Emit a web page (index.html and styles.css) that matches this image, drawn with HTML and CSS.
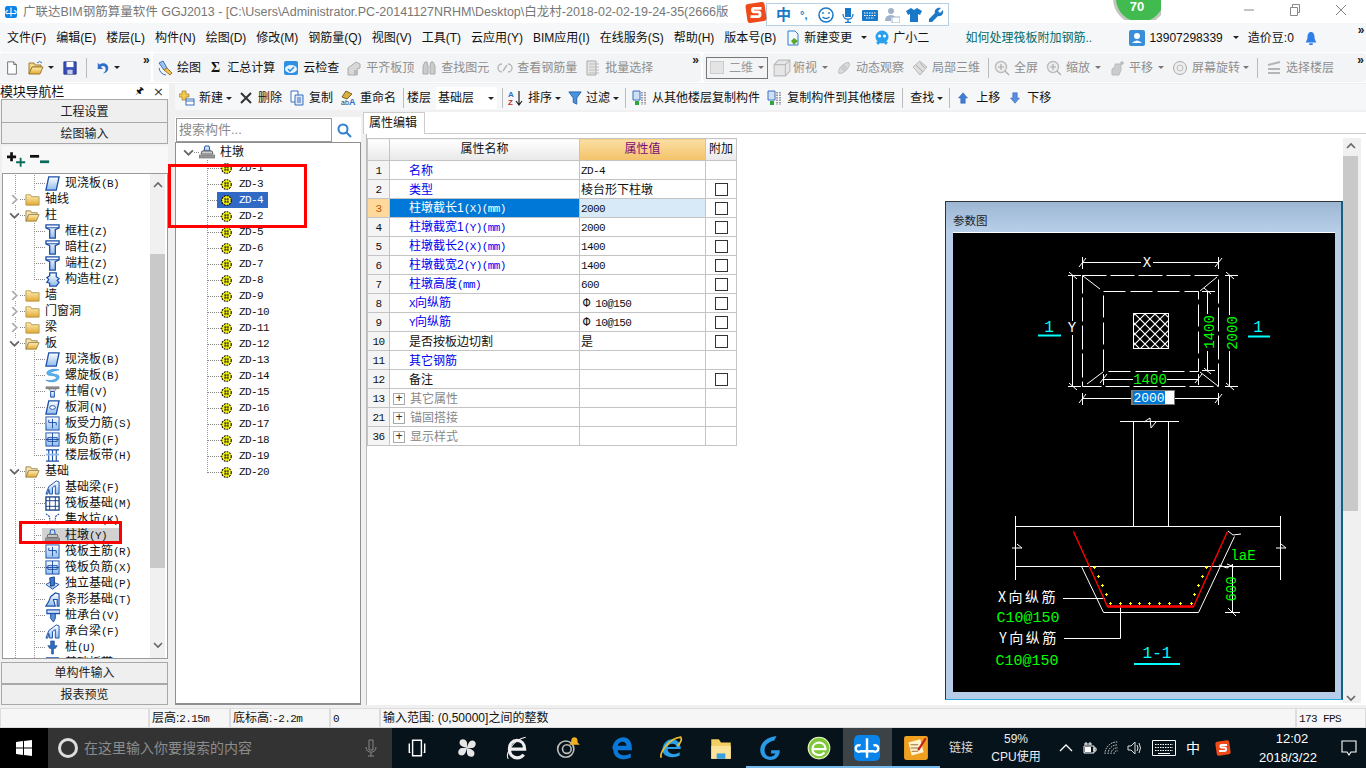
FILE: index.html
```html
<!DOCTYPE html>
<html lang="zh-CN">
<head>
<meta charset="utf-8">
<title>广联达BIM钢筋算量软件 GGJ2013</title>
<link rel="stylesheet" href="styles.css">
</head>
<body>
<svg class="defs" width="0" height="0" aria-hidden="true">
  <defs>
    <linearGradient id="gBlue" x1="0" y1="0" x2="0" y2="1"><stop offset="0" stop-color="#ffffff"/><stop offset="1" stop-color="#8fbcec"/></linearGradient>
    <linearGradient id="gFolder" x1="0" y1="0" x2="0" y2="1"><stop offset="0" stop-color="#fdf0b8"/><stop offset="1" stop-color="#e3a82e"/></linearGradient>
    <pattern id="hatch" width="10" height="10" patternUnits="userSpaceOnUse"><path d="M0 0L10 10M10 0L0 10" stroke="#fff" stroke-width="1.2"/></pattern>
    <symbol id="chevR" viewBox="0 0 10 10"><path d="M3 1l4 4-4 4" fill="none" stroke="#aaa" stroke-width="1.6"/></symbol>
    <symbol id="chevD" viewBox="0 0 10 10"><path d="M1 3l4 4 4-4" fill="none" stroke="#666" stroke-width="1.6"/></symbol>
    <symbol id="chevU" viewBox="0 0 10 10"><path d="M1 7l4-4 4 4" fill="none" stroke="#666" stroke-width="1.6"/></symbol>
    <symbol id="folder" viewBox="0 0 16 16"><path d="M1 3h5l1 2h8v9H1z" fill="url(#gFolder)" stroke="#b89a55"/></symbol>
    <symbol id="folderO" viewBox="0 0 16 16"><path d="M1 3h5l1 2h6v2H4l-3 7z" fill="#f3e3b0" stroke="#a08a55"/><path d="M4 7h11l-3 7H1z" fill="url(#gFolder)" stroke="#a08a55"/></symbol>
    <symbol id="slab" viewBox="0 0 16 16"><path d="M4 1h11l-3 14H1z" fill="url(#gBlue)" stroke="#1b4fa8" stroke-width="1.4"/></symbol>
    <symbol id="tcol" viewBox="0 0 16 16"><path d="M1 1h14v3l-4 2v9H5V6L1 4z" fill="url(#gBlue)" stroke="#1b4fa8" stroke-width="1.4"/><path d="M1 4h14" stroke="#1b4fa8"/></symbol>
    <symbol id="gz" viewBox="0 0 16 16"><path d="M5 1h7v4l3 2-2 2 2 2-3 4H5v-3L2 11l2-3-2-2 3-2z" fill="url(#gBlue)" stroke="#1b4fa8" stroke-width="1.4"/></symbol>
    <symbol id="spiral" viewBox="0 0 16 16"><path d="M15 2C8 0 1 3 2 6c1 3 9 1 10 4 1 2-5 4-11 3 5 3 13 2 14-3 1-4-8-3-9-5 0-1 4-2 9-3z" fill="#5bb5f0" stroke="#1b7fd0" stroke-width=".6"/></symbol>
    <symbol id="cap" viewBox="0 0 16 16"><path d="M1 3h14v2H1z" fill="#999" stroke="#555" stroke-width=".6"/><path d="M4 5h8l-2 3H6z" fill="#ddd" stroke="#555" stroke-width=".6"/><path d="M6 8h4v6H6z" fill="url(#gBlue)" stroke="#1b4fa8"/></symbol>
    <symbol id="hole" viewBox="0 0 16 16"><path d="M4 1h11l-3 14H1z" fill="url(#gBlue)" stroke="#1b4fa8" stroke-width="1.4"/><ellipse cx="8" cy="8" rx="3" ry="2" fill="#fff" stroke="#1b4fa8"/></symbol>
    <symbol id="rebarA" viewBox="0 0 16 16"><rect x="1" y="1" width="14" height="14" fill="url(#gBlue)" stroke="#1b4fa8"/><path d="M8 3v10M4 7h8M4 4v3M12 7v3" fill="none" stroke="#1b4fa8"/></symbol>
    <symbol id="rebarB" viewBox="0 0 16 16"><rect x="1" y="1" width="14" height="14" fill="url(#gBlue)" stroke="#1b4fa8"/><path d="M8 1v14M1 8h14M3 6h10v4H3z" fill="none" stroke="#1b4fa8"/></symbol>
    <symbol id="band" viewBox="0 0 16 16"><path d="M1 2h14M1 14h14M4 2v12M8 2v12M12 2v12" fill="none" stroke="#1b4fa8" stroke-width="1.2"/><path d="M1 7h14" stroke="#8fbcec" stroke-width="2"/></symbol>
    <symbol id="beam" viewBox="0 0 16 16"><path d="M1 15l3-8 8-6 3 1v13h-4V6L8 8v7H5l-1-5-1 5z" fill="url(#gBlue)" stroke="#1b4fa8"/></symbol>
    <symbol id="raft" viewBox="0 0 16 16"><rect x="1" y="1" width="14" height="14" fill="#fff" stroke="#123f86" stroke-width="1.4"/><path d="M5 1v14M11 1v14M1 5h14M1 11h14" stroke="#123f86"/></symbol>
    <symbol id="pit" viewBox="0 0 16 16"><path d="M1 2l4 3v5h6V5l4-3M5 10l-3 3M11 10l3 3" fill="none" stroke="#1b4fa8" stroke-width="1.2" stroke-dasharray="2 1"/></symbol>
    <symbol id="dun" viewBox="0 0 16 16"><path d="M6 2h4l1 5H5z" fill="url(#gBlue)" stroke="#1b4fa8"/><path d="M3 7h10l1 3H2z" fill="#cfcfcf" stroke="#666"/><path d="M0 11h16v3H0z" fill="#999" stroke="#666" stroke-width=".6"/></symbol>
    <symbol id="duli" viewBox="0 0 16 16"><path d="M1 9l6-3 8 3-7 5z" fill="url(#gBlue)" stroke="#1b4fa8"/><path d="M5 2l5-1v9l-4 1z" fill="#3f78c8" stroke="#123f86"/></symbol>
    <symbol id="tiao" viewBox="0 0 16 16"><path d="M1 15l3-5 2-5 5-4 4 1v13h-2V8H9l2 7z" fill="url(#gBlue)" stroke="#1b4fa8" stroke-width="1.2"/></symbol>
    <symbol id="zct" viewBox="0 0 16 16"><path d="M2 2h14v4H2z" fill="url(#gBlue)" stroke="#1b4fa8" stroke-width="1.2"/><path d="M6 6h5v5l-2 4-3-4z" fill="#5f93d8" stroke="#1b4fa8"/></symbol>
    <symbol id="zhu" viewBox="0 0 16 16"><path d="M6 1h4v5h3l-2 3H9v6H7V9H5L3 6h3z" fill="#2f6dc0" stroke="#123f86" stroke-width=".6"/></symbol>
    <symbol id="gear" viewBox="0 0 12 12"><circle cx="6" cy="6" r="5.2" fill="#ff0" stroke="#000" stroke-width="1.2" stroke-dasharray="2 1"/><path d="M3.5 4.5h5M3.5 7.5h5M4.5 3v6M7.5 3v6" stroke="#333" stroke-width="1"/></symbol>
    <symbol id="doc" viewBox="0 0 16 16"><path d="M3 1h7l3 3v11H3z" fill="#fff" stroke="#666"/><path d="M10 1v3h3" fill="#ddd" stroke="#666"/></symbol>
    <symbol id="open" viewBox="0 0 16 16"><path d="M1 3h5l1 2h6v2H4l-3 7z" fill="#f3d98a" stroke="#a07a30"/><path d="M4 7h11l-3 7H1z" fill="url(#gFolder)" stroke="#a07a30"/><path d="M9 3q3-3 5 0" fill="none" stroke="#3a6fc0"/></symbol>
    <symbol id="save" viewBox="0 0 16 16"><path d="M1 1h14v14H1z" fill="#3a4fb8" stroke="#1d2f80"/><path d="M4 1h8v6H4z" fill="#fff"/><path d="M5 10h6v5H5z" fill="#c6cfe6"/></symbol>
    <symbol id="undo" viewBox="0 0 16 16"><path d="M2 2v7h6L5.500 6.500C8 5 11 6 11 9c0 2-1 4-3 5 4 0 6-3 6-6 0-5-6-7-10-4z" fill="#2f6fc8"/></symbol>
    <symbol id="draw" viewBox="0 0 16 16"><path d="M2 3l4-2 4 7-3 2z" fill="#9ec4ee" stroke="#3a6fc0"/><path d="M7 10l3-2 5 5-2 2z" fill="#f0c050" stroke="#a07a30"/><path d="M2 8q1 6 7 7" fill="none" stroke="#3a6fc0"/></symbol>
    <symbol id="cloud" viewBox="0 0 16 16"><rect x="1" y="1" width="14" height="14" rx="2" fill="#2f8fe0"/><ellipse cx="8" cy="9" rx="6" ry="4" fill="#eaf5ff"/><path d="M5 9l2 2 4-4" fill="none" stroke="#2f8fe0" stroke-width="1.6"/></symbol>
    <symbol id="gAlign" viewBox="0 0 16 16"><path d="M2 15V8l8-6 4 2v4l-3 1v6z" fill="#d8d8d8" stroke="#aaa"/><path d="M8 10h4v5H8z" fill="#bbb"/></symbol>
    <symbol id="gBino" viewBox="0 0 16 16"><path d="M2 6l2-4h2l1 4v8H2zM9 6l1-4h2l2 4v8H9z" fill="#ccc" stroke="#aaa"/></symbol>
    <symbol id="gLink" viewBox="0 0 16 16"><path d="M5 4a3 3 0 1 0 0 8M11 4a3 3 0 1 1 0 8M6 11l4-6" fill="none" stroke="#b5b5b5" stroke-width="1.4"/></symbol>
    <symbol id="gList" viewBox="0 0 16 16"><path d="M2 1h9v14H2z" fill="#e6e6e6" stroke="#aaa"/><path d="M4 4h10M4 7h10M4 10h10M4 13h10" stroke="#bbb"/></symbol>
    <symbol id="gBox" viewBox="0 0 16 16"><path d="M1 5l4-4h10v10l-4 4H1zM1 5h10v10M11 5l4-4" fill="#e6e6e6" stroke="#bbb"/></symbol>
    <symbol id="gOrbit" viewBox="0 0 16 16"><ellipse cx="8" cy="8" rx="7" ry="3" transform="rotate(-45 8 8)" fill="#ddd" stroke="#bbb"/><circle cx="8" cy="8" r="3" fill="#ccc"/></symbol>
    <symbol id="gCube" viewBox="0 0 16 16"><path d="M8 1l7 6-7 8-7-8z" fill="#ddd" stroke="#bbb"/><path d="M4 5l7 7M8 3l5 5" stroke="#aaa"/></symbol>
    <symbol id="gZoom" viewBox="0 0 16 16"><circle cx="7" cy="7" r="5.500" fill="#eee" stroke="#bbb" stroke-width="1.400"/><path d="M11 11l4 4M7 4v6M4 7h6" stroke="#aaa" stroke-width="1.200"/></symbol>
    <symbol id="gPan" viewBox="0 0 16 16"><path d="M3 15V9l3-2V4h6v6l-2 5z" fill="#ccc" stroke="#bbb"/><path d="M11 3h4M13 1v4" stroke="#aaa"/></symbol>
    <symbol id="gRot" viewBox="0 0 16 16"><circle cx="8" cy="8" r="6.500" fill="#eee" stroke="#aaa"/><circle cx="8" cy="8" r="3" fill="none" stroke="#bbb"/></symbol>
    <symbol id="gFloor" viewBox="0 0 16 16"><path d="M2 5l12-3M2 9h12M2 13h12" stroke="#b5b5b5" stroke-width="2"/></symbol>
    <symbol id="plusNew" viewBox="0 0 16 16"><path d="M3 1h4v3h3v3H7v3H3V7H0V4h3z" fill="#f0c84a" stroke="#a07a30" stroke-width=".7"/><rect x="7" y="9" width="8" height="6" fill="#fff" stroke="#3a6fc0"/><path d="M7 11h8" stroke="#3a6fc0"/></symbol>
    <symbol id="copy" viewBox="0 0 16 16"><path d="M2 1h7v11H2z" fill="#fff" stroke="#3a6fc0"/><path d="M6 5h8v10H6z" fill="#dbe8f8" stroke="#3a6fc0"/><path d="M8 8h4M8 10h4M8 12h4" stroke="#3a6fc0"/></symbol>
    <symbol id="rename" viewBox="0 0 16 16"><path d="M6 1l6 3-5 5-5-2z" fill="#d8b040" stroke="#806020"/><text x="1" y="15" class="ic-ab">ab</text><text x="9" y="15" class="ic-a">A</text></symbol>
    <symbol id="sort" viewBox="0 0 16 16"><text x="0" y="7" class="ic-az">A</text><text x="0" y="15" class="ic-zz">Z</text><path d="M11 1v13M8 11l3 4 3-4" fill="none" stroke="#222" stroke-width="1.200"/></symbol>
    <symbol id="filter" viewBox="0 0 16 16"><path d="M1 1h14L10 8v7l-4-2V8z" fill="#4a93dc" stroke="#1f5fa8"/></symbol>
    <symbol id="fromF" viewBox="0 0 16 16"><path d="M1 1h7v9H1z" fill="#cfe0f4" stroke="#3a6fc0"/><path d="M10 2v13M13 2v13" stroke="#445" stroke-dasharray="1.500 1"/><path d="M3 11h4v4H3z" fill="#2fa83a"/></symbol>
    <symbol id="up" viewBox="0 0 16 16"><path d="M8 1l6 7h-3v7H5V8H2z" fill="#3f7ed8" stroke="#1f4fa0" stroke-width=".6"/></symbol>
    <symbol id="down" viewBox="0 0 16 16"><path d="M8 15l6-7h-3V1H5v7H2z" fill="#5a8fe0" stroke="#1f4fa0" stroke-width=".6"/></symbol>
    <symbol id="appLogo" viewBox="0 0 16 16"><rect width="16" height="16" rx="3" fill="#0a84e8"/><path d="M8 2v12M4 6.500a2 2 0 1 0 0 3.500h8a2 2 0 1 0 0-3.500" fill="none" stroke="#fff" stroke-width="1.500"/></symbol>
    <symbol id="newChange" viewBox="0 0 16 16"><path d="M3 1h7l3 3v11H3z" fill="#f3f8ff" stroke="#2f7fd0"/><path d="M9 8l4 3-4 4-3-4z" fill="#5aa82e"/></symbol>
    <symbol id="xiaoer" viewBox="0 0 16 16"><circle cx="8" cy="7" r="6.500" fill="#28a0f0"/><circle cx="5.500" cy="6" r="1.500" fill="#fff"/><circle cx="10.500" cy="6" r="1.500" fill="#fff"/><path d="M2 12l2 3 2-2h4l2 2 2-3" fill="#28a0f0"/></symbol>
    <symbol id="user" viewBox="0 0 16 16"><rect width="16" height="16" rx="2" fill="#3a8fd8"/><circle cx="8" cy="6" r="3" fill="#fff"/><path d="M3 13q5-5 10 0z" fill="#fff"/></symbol>
    <symbol id="bell" viewBox="0 0 16 16"><path d="M8 1c3 0 4 3 4 6s2 5 2 6H2c0-1 2-3 2-6s1-6 4-6z" fill="#2f7fe8"/><path d="M6 14h4v2H6z" fill="#2f7fe8"/></symbol>
    <symbol id="search" viewBox="0 0 16 16"><circle cx="7" cy="7" r="4.500" fill="none" stroke="#2f7fd0" stroke-width="2"/><path d="M10 10l5 5" stroke="#2f7fd0" stroke-width="2"/></symbol>
    <symbol id="expand" viewBox="0 0 22 18"><path d="M3.500 1h3v3.500H10v3H6.500V11h-3V7.500H0v-3h3.500z" fill="#111"/><path d="M14 7h2v4h4v2h-4v4h-2v-4h-4v-2h4z" fill="#0a6a5c"/></symbol>
    <symbol id="collapse" viewBox="0 0 22 18"><path d="M0 4h10v3H0z" fill="#111"/><path d="M11 10h10v3H11z" fill="#0a6a5c"/></symbol>
    <symbol id="win" viewBox="0 0 16 16"><path d="M0 2l7-1v6.500H0zM8 1l8-1v7.500H8zM0 8.500h7V15l-7-1zM8 8.500h8V16l-8-1z" fill="#fff"/></symbol>
    <symbol id="sLogo" viewBox="0 0 16 16"><rect x="1" y="1" width="14" height="14" rx="2" fill="#f04a1a" transform="rotate(-8 8 8)"/><path d="M12 5H6.500C5 5 5 7.500 6.500 7.500h3c2 0 2 3.500 0 3.500H4" fill="none" stroke="#fff" stroke-width="2"/></symbol>
  </defs>
</svg>

<div class="app">
  <header class="titlebar">
    <svg class="i12"><use href="#appLogo"/></svg>
    <span class="title-text">广联达BIM钢筋算量软件 GGJ2013 - [C:\Users\Administrator.PC-20141127NRHM\Desktop\白龙村-2018-02-02-19-24-35(2666版</span>
    <div class="winbtns">
      <svg class="wb" viewBox="0 0 12 12"><path d="M1 6h10" stroke="#888"/></svg>
      <svg class="wb" viewBox="0 0 12 12"><path d="M1.500 3.500h7v8h-7zM3.500 3V.5h7v8H9" fill="none" stroke="#888"/></svg>
      <svg class="wb" viewBox="0 0 12 12"><path d="M1 1l10 10M11 1L1 11" stroke="#888"/></svg>
    </div>
  </header>

  <nav class="menubar">
    <span class="m">文件(F)</span><span class="m">编辑(E)</span><span class="m">楼层(L)</span><span class="m">构件(N)</span><span class="m">绘图(D)</span><span class="m">修改(M)</span><span class="m">钢筋量(Q)</span><span class="m">视图(V)</span><span class="m">工具(T)</span><span class="m">云应用(Y)</span><span class="m">BIM应用(I)</span><span class="m">在线服务(S)</span><span class="m">帮助(H)</span><span class="m">版本号(B)</span>
    <span class="it m-ic"><svg class="i16"><use href="#newChange"/></svg>新建变更<i class="dd"></i></span>
    <span class="it m-ic2"><svg class="i16"><use href="#xiaoer"/></svg>广小二</span>
    <span class="m-news">如何处理筏板附加钢筋..</span>
    <span class="it m-user"><svg class="i16"><use href="#user"/></svg>13907298339<i class="dd"></i></span>
    <span class="m-bean">造价豆:0</span>
    <svg class="i14 m-bell"><use href="#bell"/></svg>
    <span class="more m-more">»</span>
  </nav>

  <div class="toolbar1">
    <div class="band band-a">
      <svg class="i14"><use href="#doc"/></svg>
      <span class="it"><svg class="i16"><use href="#open"/></svg><i class="dd"></i></span>
      <svg class="i14"><use href="#save"/></svg>
      <i class="sep"></i>
      <span class="it"><svg class="i14"><use href="#undo"/></svg><i class="dd"></i></span>
      <span class="more">»</span>
    </div>
    <div class="band band-b">
      <span class="it"><svg class="i16"><use href="#draw"/></svg>绘图</span>
      <span class="it it-sigma"><b class="sigma">Σ</b>汇总计算</span>
      <span class="it"><svg class="i16"><use href="#cloud"/></svg>云检查</span>
      <span class="it off nudge"><svg class="i16"><use href="#gAlign"/></svg>平齐板顶</span>
      <span class="it off nudge"><svg class="i16"><use href="#gBino"/></svg>查找图元</span>
      <span class="it off"><svg class="i16"><use href="#gLink"/></svg>查看钢筋量</span>
      <span class="it off"><svg class="i16"><use href="#gList"/></svg>批量选择</span>
      <span class="more more-b">»</span>
    </div>
    <div class="band band-c">
      <span class="combo-2d"><i class="sq"></i>二维<i class="dd dd-r"></i></span>
      <span class="it off it-tight"><svg class="i16 i-wide"><use href="#gBox"/></svg>俯视<i class="dd dd-w"></i></span>
      <span class="it off"><svg class="i16"><use href="#gOrbit"/></svg>动态观察</span>
      <span class="it off"><svg class="i16"><use href="#gCube"/></svg>局部三维</span>
      <i class="sep"></i>
      <span class="it off after-sep"><svg class="i16"><use href="#gZoom"/></svg>全屏</span>
      <span class="it off"><svg class="i16"><use href="#gZoom"/></svg>缩放<i class="dd dd-w"></i></span>
      <span class="it off"><svg class="i16"><use href="#gPan"/></svg>平移<i class="dd dd-w"></i></span>
      <span class="it off"><svg class="i16"><use href="#gRot"/></svg>屏幕旋转<i class="dd dd-n"></i></span>
      <i class="sep"></i>
      <span class="it off"><svg class="i16"><use href="#gFloor"/></svg>选择楼层</span>
      <span class="more more-c">»</span>
    </div>
  </div>

  <div class="work">
    <aside class="nav">
      <div class="nav-head"><span class="nav-title">模块导航栏</span><span class="pin">🖈</span><span class="nav-x">×</span></div>
      <div class="nav-btn nb1">工程设置</div>
      <div class="nav-btn nb2">绘图输入</div>
      <div class="nav-tools"><svg class="i-exp"><use href="#expand"/></svg><svg class="i-exp"><use href="#collapse"/></svg></div>
      <div class="nav-tree">
        <div class="nav-list">
          <div class="nr child"><i class="dash"></i><svg class="ni"><use href="#slab"/></svg><span>现浇板<em>(B)</em></span></div>
          <div class="nr top"><svg class="ch"><use href="#chevR"/></svg><i class="dash-s"></i><svg class="nf"><use href="#folder"/></svg><span>轴线</span></div>
          <div class="nr top"><svg class="ch"><use href="#chevD"/></svg><i class="dash-s"></i><svg class="nf"><use href="#folderO"/></svg><span>柱</span></div>
          <div class="nr child"><i class="dash"></i><svg class="ni"><use href="#tcol"/></svg><span>框柱<em>(Z)</em></span></div>
          <div class="nr child"><i class="dash"></i><svg class="ni"><use href="#tcol"/></svg><span>暗柱<em>(Z)</em></span></div>
          <div class="nr child"><i class="dash"></i><svg class="ni"><use href="#tcol"/></svg><span>端柱<em>(Z)</em></span></div>
          <div class="nr child last"><i class="dash"></i><svg class="ni"><use href="#gz"/></svg><span>构造柱<em>(Z)</em></span></div>
          <div class="nr top"><svg class="ch"><use href="#chevR"/></svg><i class="dash-s"></i><svg class="nf"><use href="#folder"/></svg><span>墙</span></div>
          <div class="nr top"><svg class="ch"><use href="#chevR"/></svg><i class="dash-s"></i><svg class="nf"><use href="#folder"/></svg><span>门窗洞</span></div>
          <div class="nr top"><svg class="ch"><use href="#chevR"/></svg><i class="dash-s"></i><svg class="nf"><use href="#folder"/></svg><span>梁</span></div>
          <div class="nr top"><svg class="ch"><use href="#chevD"/></svg><i class="dash-s"></i><svg class="nf"><use href="#folderO"/></svg><span>板</span></div>
          <div class="nr child"><i class="dash"></i><svg class="ni"><use href="#slab"/></svg><span>现浇板<em>(B)</em></span></div>
          <div class="nr child"><i class="dash"></i><svg class="ni"><use href="#spiral"/></svg><span>螺旋板<em>(B)</em></span></div>
          <div class="nr child"><i class="dash"></i><svg class="ni"><use href="#cap"/></svg><span>柱帽<em>(V)</em></span></div>
          <div class="nr child"><i class="dash"></i><svg class="ni"><use href="#hole"/></svg><span>板洞<em>(N)</em></span></div>
          <div class="nr child"><i class="dash"></i><svg class="ni"><use href="#rebarA"/></svg><span>板受力筋<em>(S)</em></span></div>
          <div class="nr child"><i class="dash"></i><svg class="ni"><use href="#rebarB"/></svg><span>板负筋<em>(F)</em></span></div>
          <div class="nr child last"><i class="dash"></i><svg class="ni"><use href="#band"/></svg><span>楼层板带<em>(H)</em></span></div>
          <div class="nr top"><svg class="ch"><use href="#chevD"/></svg><i class="dash-s"></i><svg class="nf"><use href="#folderO"/></svg><span>基础</span></div>
          <div class="nr child"><i class="dash"></i><svg class="ni"><use href="#beam"/></svg><span>基础梁<em>(F)</em></span></div>
          <div class="nr child"><i class="dash"></i><svg class="ni"><use href="#raft"/></svg><span>筏板基础<em>(M)</em></span></div>
          <div class="nr child"><i class="dash"></i><svg class="ni"><use href="#pit"/></svg><span>集水坑<em>(K)</em></span></div>
          <div class="nr child"><i class="dash"></i><span class="sel-gray"><svg class="ni"><use href="#dun"/></svg><span>柱墩<em>(Y)</em></span></span></div>
          <div class="nr child"><i class="dash"></i><svg class="ni"><use href="#rebarA"/></svg><span>筏板主筋<em>(R)</em></span></div>
          <div class="nr child"><i class="dash"></i><svg class="ni"><use href="#rebarB"/></svg><span>筏板负筋<em>(X)</em></span></div>
          <div class="nr child"><i class="dash"></i><svg class="ni"><use href="#duli"/></svg><span>独立基础<em>(P)</em></span></div>
          <div class="nr child"><i class="dash"></i><svg class="ni"><use href="#tiao"/></svg><span>条形基础<em>(T)</em></span></div>
          <div class="nr child"><i class="dash"></i><svg class="ni"><use href="#zct"/></svg><span>桩承台<em>(V)</em></span></div>
          <div class="nr child"><i class="dash"></i><svg class="ni"><use href="#beam"/></svg><span>承台梁<em>(F)</em></span></div>
          <div class="nr child"><i class="dash"></i><svg class="ni"><use href="#zhu"/></svg><span>桩<em>(U)</em></span></div>
          <div class="nr child"><i class="dash"></i><svg class="ni"><use href="#band"/></svg><span>基础板带<em>(W)</em></span></div>
        </div>
        <div class="vbar vbar-nav"><svg class="ar"><use href="#chevU"/></svg><i class="thumb"></i><svg class="ar"><use href="#chevD"/></svg></div>
        <i class="redbox rb-nav"></i>
      </div>
      <div class="nav-btn nb3">单构件输入</div>
      <div class="nav-btn nb4">报表预览</div>
    </aside>

    <div class="content">
      <div class="toolbar2">
        <span class="it"><svg class="i16"><use href="#plusNew"/></svg>新建<i class="dd"></i></span>
        <span class="it it-del"><svg class="i12" viewBox="0 0 12 12"><path d="M1 1l10 10M11 1L1 11" stroke="#333" stroke-width="2"/></svg>删除</span>
        <span class="it"><svg class="i16"><use href="#copy"/></svg>复制</span>
        <span class="it"><svg class="i16"><use href="#rename"/></svg>重命名</span>
        <i class="sep"></i>
        <span class="floor-lab">楼层</span>
        <span class="combo-floor">基础层<i class="dd"></i></span>
        <i class="sep sep-x"></i>
        <span class="it"><svg class="i16"><use href="#sort"/></svg>排序<i class="dd"></i></span>
        <span class="it"><svg class="i14"><use href="#filter"/></svg>过滤<i class="dd"></i></span>
        <i class="sep sep-y"></i>
        <span class="it"><svg class="i16"><use href="#fromF"/></svg>从其他楼层复制构件</span>
        <span class="it"><svg class="i16"><use href="#fromF"/></svg>复制构件到其他楼层</span>
        <i class="sep"></i>
        <span class="it">查找<i class="dd"></i></span>
        <i class="sep sep-y"></i>
        <span class="it it-move"><svg class="i12"><use href="#up"/></svg>上移</span>
        <span class="it it-move"><svg class="i12"><use href="#down"/></svg>下移</span>
      </div>

      <div class="panes">
        <section class="tree-pane">
          <div class="search"><span class="search-box">搜索构件...</span><svg class="i16"><use href="#search"/></svg></div>
          <div class="tree">
            <div class="tr root"><svg class="ch"><use href="#chevD"/></svg><i class="dash-s"></i><svg class="ti"><use href="#dun"/></svg><span>柱墩</span></div>
            <div class="tl">
              <div class="tr leaf"><i class="dash-l"></i><svg class="gi"><use href="#gear"/></svg><span class="zd">ZD-1</span></div>
              <div class="tr leaf"><i class="dash-l"></i><svg class="gi"><use href="#gear"/></svg><span class="zd">ZD-3</span></div>
              <div class="tr leaf"><i class="dash-l"></i><span class="sel-blue"><svg class="gi"><use href="#gear"/></svg><span class="zd">ZD-4</span></span></div>
              <div class="tr leaf"><i class="dash-l"></i><svg class="gi"><use href="#gear"/></svg><span class="zd">ZD-2</span></div>
              <div class="tr leaf"><i class="dash-l"></i><svg class="gi"><use href="#gear"/></svg><span class="zd">ZD-5</span></div>
              <div class="tr leaf"><i class="dash-l"></i><svg class="gi"><use href="#gear"/></svg><span class="zd">ZD-6</span></div>
              <div class="tr leaf"><i class="dash-l"></i><svg class="gi"><use href="#gear"/></svg><span class="zd">ZD-7</span></div>
              <div class="tr leaf"><i class="dash-l"></i><svg class="gi"><use href="#gear"/></svg><span class="zd">ZD-8</span></div>
              <div class="tr leaf"><i class="dash-l"></i><svg class="gi"><use href="#gear"/></svg><span class="zd">ZD-9</span></div>
              <div class="tr leaf"><i class="dash-l"></i><svg class="gi"><use href="#gear"/></svg><span class="zd">ZD-10</span></div>
              <div class="tr leaf"><i class="dash-l"></i><svg class="gi"><use href="#gear"/></svg><span class="zd">ZD-11</span></div>
              <div class="tr leaf"><i class="dash-l"></i><svg class="gi"><use href="#gear"/></svg><span class="zd">ZD-12</span></div>
              <div class="tr leaf"><i class="dash-l"></i><svg class="gi"><use href="#gear"/></svg><span class="zd">ZD-13</span></div>
              <div class="tr leaf"><i class="dash-l"></i><svg class="gi"><use href="#gear"/></svg><span class="zd">ZD-14</span></div>
              <div class="tr leaf"><i class="dash-l"></i><svg class="gi"><use href="#gear"/></svg><span class="zd">ZD-15</span></div>
              <div class="tr leaf"><i class="dash-l"></i><svg class="gi"><use href="#gear"/></svg><span class="zd">ZD-16</span></div>
              <div class="tr leaf"><i class="dash-l"></i><svg class="gi"><use href="#gear"/></svg><span class="zd">ZD-17</span></div>
              <div class="tr leaf"><i class="dash-l"></i><svg class="gi"><use href="#gear"/></svg><span class="zd">ZD-18</span></div>
              <div class="tr leaf"><i class="dash-l"></i><svg class="gi"><use href="#gear"/></svg><span class="zd">ZD-19</span></div>
              <div class="tr leaf last"><i class="dash-l"></i><svg class="gi"><use href="#gear"/></svg><span class="zd">ZD-20</span></div>
            </div>
            <i class="redbox rb-tree"></i>
          </div>
        </section>

        <section class="editor">
          <div class="tabs"><span class="tab">属性编辑</span></div>
          <div class="editor-body">
            <div class="table-wrap">
              <table class="props">
                <colgroup><col class="c1"><col class="c2"><col class="c3"><col class="c4"></colgroup>
                <thead><tr><th></th><th>属性名称</th><th class="th-val">属性值</th><th>附加</th></tr></thead>
                <tbody>
                  <tr><td class="idx">1</td><td class="nm link">名称</td><td class="val">ZD-4</td><td></td></tr>
                  <tr><td class="idx">2</td><td class="nm link">类型</td><td class="val val-cn">棱台形下柱墩</td><td class="ck"><i class="box"></i></td></tr>
                  <tr class="cur"><td class="idx">3</td><td class="nm">柱墩截长1<em>(X)(mm)</em></td><td class="val">2000</td><td class="ck"><i class="box"></i></td></tr>
                  <tr><td class="idx">4</td><td class="nm link">柱墩截宽1<em>(Y)(mm)</em></td><td class="val">2000</td><td class="ck"><i class="box"></i></td></tr>
                  <tr><td class="idx">5</td><td class="nm link">柱墩截长2<em>(X)(mm)</em></td><td class="val">1400</td><td class="ck"><i class="box"></i></td></tr>
                  <tr><td class="idx">6</td><td class="nm link">柱墩截宽2<em>(Y)(mm)</em></td><td class="val">1400</td><td class="ck"><i class="box"></i></td></tr>
                  <tr><td class="idx">7</td><td class="nm link">柱墩高度<em>(mm)</em></td><td class="val">600</td><td class="ck"><i class="box"></i></td></tr>
                  <tr><td class="idx">8</td><td class="nm link"><em>X</em>向纵筋</td><td class="val"><span class="steel">Φ</span>10@150</td><td class="ck"><i class="box"></i></td></tr>
                  <tr><td class="idx">9</td><td class="nm link"><em>Y</em>向纵筋</td><td class="val"><span class="steel">Φ</span>10@150</td><td class="ck"><i class="box"></i></td></tr>
                  <tr><td class="idx">10</td><td class="nm">是否按板边切割</td><td class="val val-cn">是</td><td class="ck"><i class="box"></i></td></tr>
                  <tr><td class="idx">11</td><td class="nm link">其它钢筋</td><td class="val"></td><td></td></tr>
                  <tr><td class="idx">12</td><td class="nm">备注</td><td class="val"></td><td class="ck"><i class="box"></i></td></tr>
                  <tr class="grp"><td class="idx">13</td><td class="nm-g"><span class="grp-in"><i class="plus">+</i>其它属性</span></td><td></td><td></td></tr>
                  <tr class="grp"><td class="idx">21</td><td class="nm-g"><span class="grp-in"><i class="plus">+</i>锚固搭接</span></td><td></td><td></td></tr>
                  <tr class="grp"><td class="idx">36</td><td class="nm-g"><span class="grp-in"><i class="plus">+</i>显示样式</span></td><td></td><td></td></tr>
                </tbody>
              </table>
            </div>
            <div class="vbar vbar-ed"><svg class="ar"><use href="#chevU"/></svg><i class="thumb"></i><svg class="ar"><use href="#chevD"/></svg></div>
          </div>

          <div class="param">
            <div class="param-title">参数图</div>
            <svg class="cad" width="382" height="459" viewBox="953 234 382 459">
              <rect x="953" y="234" width="382" height="459" fill="#000"/>
              <g class="ln">
                <rect x="1082.500" y="276.500" width="136" height="111" stroke-dasharray="24 4"/>
                <rect x="1103.500" y="292.500" width="95" height="80" stroke-dasharray="22 5"/>
                <path d="M1083 277l17 13M1217 278l-17 14M1087 385l16-12M1218 387l-18-14"/>
                <rect x="1133.500" y="314.500" width="35" height="35" fill="url(#hatch)"/>
                <path d="M1082.500 263.500H1141M1153 263.500H1218.500M1082.500 258v12M1218.500 258v12M1079 268l7-9M1215 268l7-9"/>
                <path d="M1072.500 276.500V322M1072.500 336V387.500M1068 276.500h13M1068 387.500h13M1069 273l8 7M1069 384l8 7"/>
                <path d="M1229.500 276.500V316M1229.500 352V387.500M1225 276.500h13M1225 387.500h13M1226 273l8 7M1226 384l8 7"/>
                <path d="M1207.500 292.500V315M1207.500 352V372.500M1202 292.500h13M1202 371.500h13M1204 369l7 6M1204 289l7 6"/>
                <path d="M1103.500 380.500H1133M1167 380.500H1198.500M1103.500 375v11M1198.500 375v11M1100 384l7-9M1195 384l7-9"/>
                <path d="M1082.500 399.500H1131M1175 399.500H1218.500M1082.500 394v12M1218.500 394v12M1079 404l7-9M1215 404l7-9"/>
                <path d="M1120 422.500H1179M1133.500 422.500V527.500M1168.500 422.500V527.500M1144 423l6-4 1 10 5-6"/>
                <path d="M1015.500 527.500H1280.500M1015.500 567.500H1280.500M1015.500 517V581M1280.500 517V581M1012 549h10l-5-4M1276 549h10l-5-4"/>
                <path d="M1081.500 567.500L1103.500 613.500H1198.500L1234.500 537.500M1228 532l5 4 8-1M1219 566l8 3 5-3"/>
                <path d="M1063 599.500H1105M1064 639.500H1120.500V604M1232.500 565V613M1225 613.500h15M1228 609l8 8M1227 565l7 3"/>
              </g>
              <path class="red" d="M1073.500 532.500L1107.500 607.500H1193.500L1227.500 532.500"/>
              <path class="red-b" d="M1107.500 607.500H1193.500"/>
              <path class="yel" d="M1093 568.500h3M1094.500 567v3M1097 577.500h3M1098.500 576v3M1101 586.500h3M1102.500 585v3M1105 595.500h3M1106.500 594v3M1109 604.500h3M1110.500 603v3M1119 604.500h3M1120.500 603v3M1129 604.500h3M1130.500 603v3M1138 604.500h3M1139.500 603v3M1148 604.500h3M1149.500 603v3M1158 604.500h3M1159.500 603v3M1168 604.500h3M1169.500 603v3M1179 604.500h3M1180.500 603v3M1190 604.500h3M1191.500 603v3M1193 595.500h3M1194.500 594v3M1197 586.500h3M1198.500 585v3M1201 577.500h3M1202.500 576v3M1205 568.500h3M1206.500 567v3"/>
              <path class="cy" d="M1038 336.500H1061M1248 337.500H1270M1134 665H1180"/>
              <text class="t-w" x="1147" y="268" text-anchor="middle">X</text>
              <text class="t-w" x="1072" y="333" text-anchor="middle">Y</text>
              <text class="t-c" x="1049" y="333" text-anchor="middle">1</text>
              <text class="t-c" x="1258" y="333" text-anchor="middle">1</text>
              <text class="t-g t-d" transform="translate(1214 333) rotate(-90)" text-anchor="middle">1400</text>
              <text class="t-g t-d" transform="translate(1237 334) rotate(-90)" text-anchor="middle">2000</text>
              <text class="t-g t-d" x="1150" y="385" text-anchor="middle">1400</text>
              <rect x="1131" y="391" width="44" height="15" fill="#777"/>
              <rect x="1133" y="392" width="41" height="13" fill="#fff"/>
              <rect x="1133" y="392" width="32" height="13" fill="#0078d7"/>
              <text class="t-s" x="1149" y="403" text-anchor="middle">2000</text>
              <text class="t-g t-d" transform="translate(1236 590) rotate(-90)" text-anchor="middle">600</text>
              <text class="t-g t-d" x="1243" y="561" text-anchor="middle">laE</text>
              <text class="t-cn" x="1028" y="603" text-anchor="middle">X向纵筋</text>
              <text class="t-g" x="1028" y="623" text-anchor="middle">C10@150</text>
              <text class="t-cn" x="1029" y="644" text-anchor="middle">Y向纵筋</text>
              <text class="t-g" x="1027" y="666" text-anchor="middle">C10@150</text>
              <text class="t-c" x="1157" y="659" text-anchor="middle">1-1</text>
            </svg>
          </div>
        </section>
      </div>
    </div>
  </div>

  <footer class="statusbar">
    <span class="st"></span><span class="st">层高:<em>2.15m</em></span><span class="st">底标高:<em>-2.2m</em></span><span class="st"><em>0</em></span><span class="st">输入范围: (0,50000]之间的整数</span><span class="st"><em>173 FPS</em></span>
  </footer>

  <div class="taskbar">
    <div class="start"><svg class="i16"><use href="#win"/></svg></div>
    <div class="tsearch"><i class="ring"></i><span class="ts-text">在这里输入你要搜索的内容</span>
      <svg class="mic" viewBox="0 0 12 18"><path d="M4 1h4v10H4zM1 8c0 7 10 7 10 0M6 14v3M3 17h6" fill="none" stroke="#888"/></svg></div>
    <div class="tk"><svg class="ti-20" viewBox="0 0 20 20"><path d="M6 3h8v14H6zM3 6v8h1M17 6v8h-1" fill="none" stroke="#fff" stroke-width="1.300"/></svg></div>
    <div class="tk"><svg class="ti-20" viewBox="0 0 24 24"><path d="M12 12C7 11 3 9 4 5s7-3 8 1zM12 12c1-5 3-9 7-8s3 7-1 8zM12 12c5 1 9 3 8 7s-7 3-8-1zM12 12c-1 5-3 9-7 8s-3-7 1-8z" fill="#e6e6e6"/></svg></div>
    <div class="tk"><svg class="ti-24" viewBox="0 0 24 24"><path d="M5 13h14c0-5-3-8-7-8s-7 3-7 8c0 5 3 8 7 8 3 0 5-1 6-3" fill="none" stroke="#eee" stroke-width="3"/><path d="M4 22C1 18 8 4 20 2" fill="none" stroke="#eee"/></svg></div>
    <div class="tk tk-wide"><svg class="ti-24" viewBox="0 0 24 24"><circle cx="9" cy="13" r="7.500" fill="none" stroke="#bbb" stroke-width="1.500"/><circle cx="10" cy="13" r="4" fill="none" stroke="#bbb" stroke-width="1.500"/><path d="M17 2c3 0 3 3 3 5l2 2H12l2-2c0-2 0-5 3-5z" fill="#f0b020"/></svg></div>
    <div class="tk"><svg class="ti-24" viewBox="0 0 24 24"><path d="M4 12C5 5 10 2 14 2c5 0 8 4 8 10v2H9c0 5 7 6 12 3v4c-7 3-16 1-16-7zM9 10h8c0-5-7-5-8 0z" fill="#0a78d8"/></svg></div>
    <div class="tk"><svg class="ti-24" viewBox="0 0 24 24"><path d="M4 13C5 7 9 4 13 4c5 0 8 4 8 9H9c0 5 7 6 11 3v3c-6 3-16 2-16-6zM9 11h8c0-4-7-4-8 0z" fill="#2aa0e8"/><path d="M3 21C1 17 10 3 21 2c2 3-1 6-3 8" fill="none" stroke="#f0c030" stroke-width="1.500"/></svg></div>
    <div class="tk"><svg class="ti-24" viewBox="0 0 24 24"><path d="M3 4h7l2 3h9v15H3z" fill="#f4cd62"/><path d="M3 10h18v12H3z" fill="#fbe39a"/><path d="M8 17h8v5H8z" fill="#3aa0e0"/></svg></div>
    <div class="tk on"><svg class="ti-24" viewBox="0 0 24 24"><path d="M18 1C9 2 3 7 3 14c0 5 4 9 9 9 5 0 9-3 9-9h-8v3h4c-1 2-3 3-5 3-3 0-5-3-5-6 0-5 4-8 9-9z" fill="#2a9ae8"/></svg></div>
    <div class="tk on"><svg class="ti-24" viewBox="0 0 24 24"><circle cx="12" cy="12" r="10" fill="#7ec83a" stroke="#e6f5c8"/><path d="M6 13h12c0-8-12-8-12 0 0 6 8 7 11 3" fill="none" stroke="#fff" stroke-width="2"/></svg></div>
    <div class="tk on active"><svg class="ti-24"><use href="#appLogo"/></svg></div>
    <div class="tk on"><svg class="ti-24" viewBox="0 0 24 24"><rect x="1" y="1" width="22" height="22" rx="2" fill="#f0a020"/><path d="M5 7l11-3 3 12-11 3z" fill="#fff3d0"/><path d="M7 9h7M7 12h8M8 15h6" stroke="#a07030"/><path d="M14 14l7-11" stroke="#c02020" stroke-width="2"/></svg></div>
    <span class="tray-link">链接</span>
    <span class="tray-cpu"><span>59%</span><span>CPU使用</span></span>
    <div class="tray">
      <svg class="tr-i" viewBox="0 0 16 16"><path d="M2 11l6-6 6 6" fill="none" stroke="#fff" stroke-width="1.300"/></svg>
      <svg class="tr-i" viewBox="0 0 16 16"><path d="M3 6h10v7H3zM13 8h2v3h-2zM5 2v3M9 2v3M3 4h8" fill="none" stroke="#fff"/><path d="M4 7h6v5H4z" fill="#fff"/></svg>
      <svg class="tr-i" viewBox="0 0 16 16"><path d="M1 14a12 12 0 0 1 13-12M4 14a9 9 0 0 1 10-9M7 14a6 6 0 0 1 7-6M10 14a3 3 0 0 1 4-3" fill="none" stroke="#ddd" stroke-dasharray="1.500 1"/></svg>
      <svg class="tr-i" viewBox="0 0 16 16"><path d="M1 6h3l4-4v12l-4-4H1zM10 5q2 3 0 6M12 3q3 5 0 10" fill="none" stroke="#ddd"/></svg>
      <svg class="tr-k" viewBox="0 0 24 16"><path d="M.5 .5h23v15H.5z" fill="none" stroke="#fff"/><path d="M3 4.500h18M3 7.500h18M3 10.500h18" fill="none" stroke="#fff" stroke-dasharray="1.500 1"/><path d="M6 13.500h12" stroke="#fff"/></svg>
      <span class="tr-z">中</span>
      <svg class="tr-i tr-s"><use href="#sLogo"/></svg>
    </div>
    <span class="clock"><span>12:02</span><span>2018/3/22</span></span>
    <svg class="notif" viewBox="0 0 16 16"><path d="M1 1h14v11H10l-2 3-2-3H1z" fill="none" stroke="#fff" stroke-width="1.100"/></svg>
  </div>

  <div class="sogou">
    <svg class="sg-s"><use href="#sLogo"/></svg>
    <div class="sg-bar">
      <b class="sg-z">中</b><b class="sg-p">°,</b>
      <svg class="sg-i" viewBox="0 0 16 16"><circle cx="8" cy="8" r="7" fill="none" stroke="#1a78c8" stroke-width="1.500"/><path d="M5 5v2M11 5v2M4.500 10q3.500 3 7 0" fill="none" stroke="#1a78c8" stroke-width="1.300"/></svg>
      <svg class="sg-i" viewBox="0 0 16 16"><path d="M5 1h6v9H5z" fill="#1a78c8"/><path d="M3 7c0 7 10 7 10 0M8 13v3M5 15.500h6" fill="none" stroke="#1a78c8" stroke-width="1.300"/></svg>
      <svg class="sg-i" viewBox="0 0 16 16"><rect y="3" width="16" height="11" rx="1" fill="#1a78c8"/><path d="M2 6h12M2 8.500h12M4 11h8" stroke="#fff" stroke-dasharray="1.500 1"/></svg>
      <svg class="sg-i" viewBox="0 0 16 16"><circle cx="7" cy="4" r="3" fill="#9fb3c8"/><path d="M1 14q0-6 6-6 3 0 4 2H7v4z" fill="#9fb3c8"/><rect x="8" y="10" width="8" height="6" fill="#fff" stroke="#9fb3c8"/></svg>
      <svg class="sg-i" viewBox="0 0 16 16"><path d="M5 1L0 4l2 4 2-1v8h8V7l2 1 2-4-5-3-3 2z" fill="#1a78c8"/></svg>
      <svg class="sg-i" viewBox="0 0 16 16"><path d="M15 3l-3 3-2-2 3-3C9 0 6 3 7 6L1 12v3h3l6-6c3 1 6-2 5-6z" fill="#1a78c8"/></svg>
    </div>
  </div>
  <div class="score"><span>70</span></div>
</div>
</body>
</html>
```

FILE: styles.css
```css
* { box-sizing: border-box; }
html, body { margin: 0; padding: 0; width: 1366px; height: 768px; overflow: hidden; background: #fff; }
body { font: 12px/16px "Liberation Sans", "Noto Sans CJK SC", sans-serif; color: #111; }
i, em, b { font-style: normal; }
.defs { position: absolute; }
.app { position: relative; width: 1366px; height: 768px; display: flex; flex-direction: column; overflow: hidden; }
.ic-ab { font: 7px "Liberation Sans", sans-serif; fill: #333; }
.ic-a { font: bold 9px "Liberation Sans", sans-serif; fill: #2f6fc8; }
.ic-az { font: bold 8px "Liberation Sans", sans-serif; fill: #2f6fc8; }
.ic-zz { font: bold 8px "Liberation Sans", sans-serif; fill: #c03030; }

.i12 { width: 12px; height: 12px; flex: none; }
.i14 { width: 14px; height: 14px; flex: none; }
.i16 { width: 16px; height: 16px; flex: none; }
.i-wide { width: 20px; height: 18px; }
.dd { width: 0; height: 0; flex: none; border: 3px solid transparent; border-top: 3px solid #222; border-bottom: 0; }
.sep { width: 1px; height: 20px; background: #bbb; flex: none; }
.it { display: inline-flex; align-items: center; gap: 4px; white-space: nowrap; }
.off { color: #8e8e8e; }
.more { font: bold 12px/10px "Liberation Sans", sans-serif; color: #222; align-self: flex-start; margin-top: 2px; }

/* title */
.titlebar { height: 23px; flex: none; background: #fff; display: flex; align-items: center; padding-left: 5px; gap: 6px; }
.title-text { width: 720px; overflow: hidden; white-space: nowrap; color: #777; font-size: 12.500px; }
.winbtns { margin-left: auto; display: flex; gap: 34px; padding-right: 19px; padding-bottom: 4px; }
.wb { width: 12px; height: 12px; }

/* menu */
.menubar { height: 29px; flex: none; background: #f6f7f8; display: flex; align-items: center; padding-left: 2px; white-space: nowrap; }
.m { padding: 0 5px; }
.m-ic { margin-left: 4px; gap: 3px; }
.m-ic .dd { margin-left: 6px; }
.m-ic2 { margin-left: 7px; gap: 3px; }
.m-news { margin-left: 36px; color: #006a6a; width: 164px; }
.m-user { gap: 4px; }
.m-user .dd { margin-left: 6px; }
.m-bean { margin-left: 9px; }
.m-bell { margin-left: 10px; }
.m-more { margin-left: 40px; }

/* toolbar 1 */
.toolbar1 { height: 31px; flex: none; display: flex; background: #fff; padding-top: 1px; }
.band { height: 29px; background: #f3f4f6; border-radius: 3px; display: flex; align-items: center; }
.band-a { width: 151px; padding-left: 5px; gap: 9px; position: relative; }
.band-a .more { margin-left: 14px; }
.band-b { width: 548px; margin-left: 2px; padding-left: 4px; gap: 8px; }
.band-b .it-sigma { gap: 7px; margin-left: 2px; }
.nudge { margin-left: -1px; }
.sigma { font: bold 14px/14px "Liberation Serif", serif; color: #111; }
.more-b { margin-left: auto; margin-right: 2px; }
.band-c { flex: 1; margin-left: 2px; padding-left: 3px; gap: 8px; }
.more-c { margin-left: auto; margin-right: 2px; }
.combo-2d { width: 62px; height: 22px; border: 1px solid #777; display: flex; align-items: center; padding-left: 3px; gap: 5px; color: #999; }
.sq { width: 14px; height: 13px; background: #e4e4e4; border: 1px solid #ccc; }
.dd-r { margin-left: auto; margin-right: 3px; border-top-color: #777; }
.dd-w { margin-left: 1px; border-top-color: #777; }
.dd-n { margin-left: -1px; border-top-color: #777; }
.it-tight { gap: 1px; margin-left: -4px; }
.it-tight .dd-w { margin-left: 4px; }
.after-sep { margin-left: -3px; }

/* work */
.work { height: 625px; flex: none; display: flex; background: #f0f0f0; }
.nav { width: 169px; flex: none; display: flex; flex-direction: column; padding-top: 1px; background: #f0f0f0; }
.nav-head { height: 15px; display: flex; align-items: center; background: #fff; font-size: 13px; }
.nav-title { flex: 1; letter-spacing: -.2px; }
.pin { font: 10px "DejaVu Sans", sans-serif; width: 18px; }
.nav-x { font: 13px "DejaVu Sans", sans-serif; width: 16px; color: #333; }
.nav-btn { margin-left: 1px; width: 167px; border: 1px solid #a8a8a8; background: #efefef; text-align: center; font-size: 12px; display: flex; align-items: center; justify-content: center; color: #222; }
.nb1 { height: 24px; padding-top: 2px; }
.nb2 { height: 22px; margin-top: -1px; padding-top: 2px; }
.nb3 { height: 22px; margin-top: 3px; }
.nb4 { height: 21px; margin-top: 0; }
.nav-tools { height: 27px; margin: 2px 0 0 2px; width: 166px; display: flex; gap: 3px; align-items: center; padding-left: 5px; background: #f8f8f8; }
.i-exp { width: 20px; height: 17px; }
.nav-tree { position: relative; margin-left: 2px; width: 166px; height: 486px; background: #fff; border: 1px solid #9a9a9a; display: flex; overflow: hidden; }
.nav-list { flex: none; width: 147px; height: 484px; overflow: hidden; padding-top: 1px; }
.nr { height: 16px; display: flex; align-items: center; white-space: nowrap; font-size: 12px; }
.nr em { font: 11px/16px "Liberation Mono", monospace; letter-spacing: -.6px; }
.nr.top { padding-left: 6px; background: linear-gradient(#999 1px, transparent 1px) 12px 0 / 1px 2px repeat-y; }
.nr.child { padding-left: 31px; background: linear-gradient(#999 1px, transparent 1px) 12px 0 / 1px 2px repeat-y, linear-gradient(#999 1px, transparent 1px) 31px 0 / 1px 2px repeat-y; }
.nr.child.last { background: linear-gradient(#999 1px, transparent 1px) 12px 0 / 1px 2px repeat-y, repeating-linear-gradient(#999 0 1px, transparent 1px 2px) 31px 0 / 1px 8px no-repeat; }
.ch { width: 11px; height: 11px; flex: none; background: #fff; }
.dash { width: 11px; flex: none; border-top: 1px dotted #888; }
.dash-s { width: 5px; flex: none; border-top: 1px dotted #888; }
.ni { width: 15px; height: 15px; flex: none; margin-right: 5px; }
.nf { width: 15px; height: 15px; flex: none; margin-right: 5px; margin-left: 0; }
.sel-gray { display: flex; align-items: center; background: #d2d2d2; margin-left: -3px; padding-left: 3px; padding-right: 14px; height: 14px; }
.vbar { flex: none; display: flex; flex-direction: column; align-items: center; background: #f0f0f0; }
.vbar-nav { width: 15px; height: 100%; padding-top: 6px; }
.vbar-nav .thumb { display: block; width: 100%; height: 314px; margin: 64px 0 72px; background: #c9c9c9; }
.ar { width: 10px; height: 10px; flex: none; }
.redbox { position: absolute; border: 3px solid #f00; }
.rb-nav { left: 16px; top: 347px; width: 103px; height: 23px; }

.content { flex: 1; min-width: 0; display: flex; flex-direction: column; margin-left: 6px; padding-top: 1px; }
.toolbar2 { height: 26px; flex: none; background: #f6f7f9; display: flex; align-items: center; gap: 7px; padding-left: 4px; padding-top: 2px; white-space: nowrap; }
.toolbar2 .dd { margin-left: -1px; }
.it-del { margin-left: 1px; gap: 6px; }
.floor-lab { margin-left: -4px; }
.combo-floor { width: 61px; height: 22px; margin-left: -2px; background: #fff; display: flex; align-items: center; justify-content: space-between; padding: 0 3px 0 2px; }
.sep-x { margin: 0 -2px; }
.sep-y { margin: 0 -1px; }
.it-move { gap: 7px; margin-left: 1px; }
.it-move + .it-move { margin-left: 2px; gap: 6px; }
.panes { flex: 1; min-height: 0; display: flex; margin-top: 2px; }
.tree-pane { width: 186px; flex: none; display: flex; flex-direction: column; padding-top: 5px; margin-bottom: 3px; }
.search { height: 25px; display: flex; align-items: center; gap: 4px; padding-left: 1px; background: #fff; flex: none; }
.search-box { width: 156px; height: 24px; border: 1px solid #9a9a9a; color: #8a8a8a; padding: 3px 2px; font-size: 13px; background: #fff; }
.tree { position: relative; flex: 1; background: #fff; border: 1px solid #8f8f8f; border-bottom-width: 2px; border-right-width: 1px; padding-top: 1px; }
.tr { height: 16px; display: flex; align-items: center; }
.root { padding-left: 7px; font-size: 12px; }
.ti { width: 16px; height: 16px; flex: none; margin-right: 5px; }
.tl { background: linear-gradient(#999 1px, transparent 1px) 31px 0 / 1px 2px repeat-y; height: 312px; }
.leaf { padding-left: 31px; }
.dash-l { width: 14px; flex: none; border-top: 1px dotted #888; }
.gi { width: 11px; height: 11px; flex: none; margin-right: 7px; }
.zd { font: 11px/16px "Liberation Mono", monospace; letter-spacing: -.6px; }
.sel-blue { display: flex; align-items: center; height: 16px; background: #316ac5; color: #fff; width: 51px; margin-left: -4px; padding-left: 4px; }
.rb-tree { left: -8px; top: 21px; width: 139px; height: 64px; }

.editor { position: relative; flex: 1; min-width: 0; margin-left: 5px; display: flex; flex-direction: column; background: #fff; margin-bottom: 3px; }
.tabs { height: 22px; flex: none; background: #fff; border-bottom: 1px solid #ccc; }
.tab { display: inline-block; height: 22px; margin-left: -3px; padding: 2px 5px 0; width: 62px; background: #fff; border: 1px solid #ccc; border-bottom: 0; color: #111; }
.editor-body { flex: 1; min-height: 0; display: flex; padding-right: 5px; padding-top: 4px; border-left: 1px solid #bbb; }
.table-wrap { flex: 1; }
.props { border-collapse: collapse; table-layout: fixed; width: 369px; }
.c1 { width: 22px; } .c2 { width: 190px; } .c3 { width: 126px; } .c4 { width: 31px; }
.props th, .props td { border: 1px solid #c4c4c4; padding: 2px 0 0; height: 19px; font-weight: 400; white-space: nowrap; line-height: 15px; vertical-align: middle; }
.props th { height: 22px; padding-top: 0; background: linear-gradient(#fff, #e9e9e9); text-align: center; }
.props .th-val { background: linear-gradient(#fbdfa4, #f3c268); color: #7a0a7a; }
.props .idx { text-align: center; font: 11px/15px "Liberation Mono", monospace; letter-spacing: -.6px; background: #f4f4f4; }
.props .nm { padding-left: 19px; }
.nm em { font: 11px/15px "Liberation Mono", monospace; letter-spacing: -.6px; }
.link { color: #0000ee; }
.props .val { padding-left: 1px; font: 11px/15px "Liberation Mono", "Noto Sans CJK SC", monospace; letter-spacing: -.6px; }
.props .val-cn { font: 12px/15px "Liberation Sans", "Noto Sans CJK SC", sans-serif; letter-spacing: 0; }
.ck { text-align: center; }
.props .ck { padding-top: 0; }
.box { display: inline-block; width: 13px; height: 13px; border: 1px solid #333; vertical-align: middle; }
.cur .idx { color: #c05a00; }
.props .cur .idx { background: #ffd99b; }
.cur .nm { background: #0078d7; color: #fff; }
.cur .val { background: #d8e9f8; }
.steel { padding: 0 5px 0 2px; font-size: 12px; letter-spacing: 0; }
.grp { color: #888; }
.grp .idx { color: #111; }
.props .nm-g { padding-left: 3px; }
.grp-in { display: flex; align-items: center; gap: 5px; }
.plus { width: 12px; height: 12px; flex: none; border: 1px solid #aaa; font: 12px/10px "Liberation Mono", monospace; text-align: center; color: #333; }
.vbar-ed { width: 18px; padding-top: 3px; padding-right: 3px; margin-left: auto; height: 565px; }
.vbar-ed .thumb { display: block; width: 15px; height: 355px; margin-top: 5px; margin-bottom: 182px; background: #c9c9c9; }
.param { position: absolute; left: 579px; top: 89px; width: 398px; height: 499px; background: linear-gradient(#9db7d3 0, #b9cfe9 31px, #b5cde8 100%); border: 1px solid #333; border-right: 2px solid #16607e; border-bottom-color: #29a8e0; padding: 0 0 0 7px; }
.param-title { width: 382px; height: 31px; padding-top: 11px; font-size: 11.500px; color: #222; border-bottom: 1px solid #fff; }
.cad { display: block; }
.ln { fill: none; stroke: #fff; stroke-width: 1; }
.red { fill: none; stroke: #f00; stroke-width: 1.400; }
.red-b { fill: none; stroke: #f00; stroke-width: 2.400; }
.yel { fill: none; stroke: #ff0; stroke-width: 1; }
.cy { fill: none; stroke: #0ff; stroke-width: 2; }
.t-w { font: 14px "Liberation Mono", monospace; fill: #fff; }
.t-c { font: 16px "Liberation Mono", monospace; fill: #0ff; }
.t-g { font: 15px "Liberation Mono", monospace; fill: #0f0; }
.t-d { font-size: 14px; }
.t-s { font: 13px "Liberation Mono", monospace; fill: #fff; }
.t-cn { font: 14px "Noto Sans CJK SC", sans-serif; fill: #fff; letter-spacing: 2.500px; }

/* status */
.statusbar { height: 20px; flex: none; display: grid; grid-template-columns: 149px 81px 100px 50px 916px 70px; background: #f6f6f6; }
.st { border: 1px solid #ddd; padding-left: 2px; font-size: 12px; line-height: 18px; white-space: nowrap; overflow: hidden; }
.st em { font: 11px/18px "Liberation Mono", monospace; letter-spacing: -.6px; }

/* taskbar */
.taskbar { height: 40px; flex: none; background: #07131a; display: flex; align-items: center; color: #fff; }
.start { width: 48px; height: 40px; background: #000; display: flex; align-items: center; justify-content: center; }
.tsearch { width: 344px; height: 40px; background: #333; display: flex; align-items: center; padding-left: 10px; }
.ring { width: 20px; height: 20px; border: 3px solid #ddd; border-radius: 50%; flex: none; }
.ts-text { margin-left: 6px; font-size: 14px; color: #8c8c8c; flex: 1; }
.mic { width: 12px; height: 18px; margin-right: 15px; }
.tk { width: 50px; height: 40px; display: flex; align-items: center; justify-content: center; flex: none; }
.tk-wide { margin-left: 2px; margin-right: 2px; }
.tk.on { box-shadow: inset 0 -2px 0 #76b9ed; width: 48.500px; }
.tk.active { background: #3b4347; }
.ti-20 { width: 22px; height: 22px; }
.ti-24 { width: 26px; height: 26px; }
.tray-link { margin-left: 9px; font-size: 12px; color: #ddd; width: 25px; white-space: nowrap; }
.tray-cpu { margin-left: 18px; width: 48px; display: flex; flex-direction: column; align-items: center; font-size: 12px; line-height: 18px; color: #eee; white-space: nowrap; }
.tray { display: flex; align-items: center; margin-left: 18px; gap: 7px; }
.tr-i { width: 16px; height: 16px; flex: none; }
.tr-k { width: 24px; height: 16px; flex: none; margin-left: 2px; }
.tr-z { font-size: 14px; margin-left: 3px; margin-right: 5px; }
.tr-s { margin-left: 3px; }
.clock { margin-left: 26px; width: 62px; display: flex; flex-direction: column; align-items: center; font-size: 13px; line-height: 19px; white-space: nowrap; }
.clock span:first-child { margin-left: 8px; }
.notif { width: 16px; height: 16px; margin-left: 22px; }

/* floating */
.sogou { position: absolute; left: 745px; top: 0; display: flex; align-items: flex-start; }
.sg-s { width: 22px; height: 25px; z-index: 1; }
.sg-bar { margin-left: -1px; margin-top: 3px; width: 183px; height: 23px; background: #fff; border: 1px solid #b6cfe2; display: flex; align-items: center; padding-left: 9px; gap: 6px; color: #1a78c8; }
.sg-z { font-size: 15px; font-weight: 700; width: 16px; }
.sg-p { font-size: 11px; width: 12px; margin-left: 2px; }
.sg-i { width: 16px; height: 16px; flex: none; }
.score { position: absolute; left: 1113px; top: 0; width: 48px; height: 20px; overflow: hidden; display: flex; align-items: flex-end; justify-content: center; color: #fff; font: bold 13px/14px "Liberation Sans", sans-serif; padding-bottom: 6px; }
.score::before { content: ""; position: absolute; left: 0; top: -29px; width: 48px; height: 48px; border-radius: 50%; background: #41bb4f; border: 3px solid #bfc6c0; }
.score span { position: relative; }
```
